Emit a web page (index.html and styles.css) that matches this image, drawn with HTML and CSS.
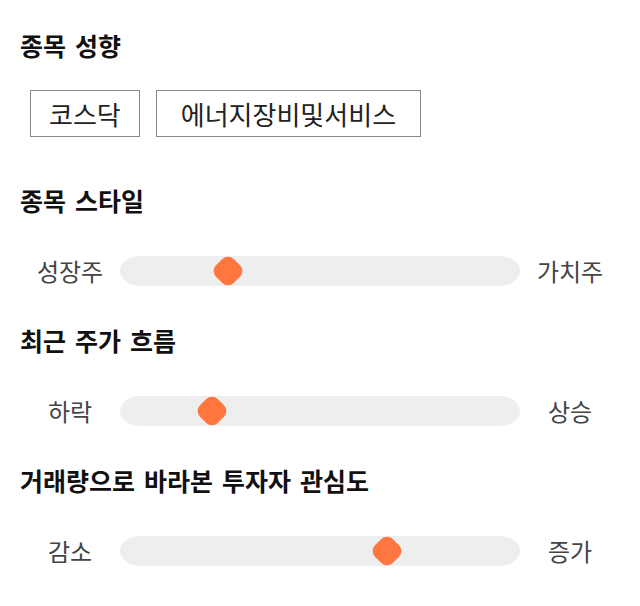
FILE: index.html
```html
<!DOCTYPE html>
<html lang="ko">

<head>
 <meta charset="UTF-8">
 <meta name="viewport" content="width=device-width, initial-scale=1.0">
 <title>종목 분석</title>
 <link rel="stylesheet" href="styles.css">
</head>

<body>

 <section class="block block-chips">
  <h2 class="block-title">종목 성향</h2>
  <div class="chips">
   <span class="chip">코스닥</span>
   <span class="chip chip-wide">에너지장비및서비스</span>
  </div>
 </section>

 <section class="block">
  <h2 class="block-title">종목 스타일</h2>
  <div class="scale">
   <span class="scale-label">성장주</span>
   <div class="track"><span class="thumb" style="left: 27%"></span></div>
   <span class="scale-label">가치주</span>
  </div>
 </section>

 <section class="block">
  <h2 class="block-title">최근 주가 흐름</h2>
  <div class="scale">
   <span class="scale-label">하락</span>
   <div class="track"><span class="thumb" style="left: 23%"></span></div>
   <span class="scale-label">상승</span>
  </div>
 </section>

 <section class="block">
  <h2 class="block-title">거래량으로 바라본 투자자 관심도</h2>
  <div class="scale">
   <span class="scale-label">감소</span>
   <div class="track"><span class="thumb" style="left: 66.8%"></span></div>
   <span class="scale-label">증가</span>
  </div>
 </section>

</body>

</html>
```

FILE: styles.css
```css
:root {
 --main-font: "Noto Sans CJK KR", "Noto Sans", sans-serif;
 --title-color: #111;
 --text-color: #444;
 --track-color: #eeeeee;
 --thumb-color: #ff763f;
}

html {
 box-sizing: border-box;
 font-family: var(--main-font);
}

*,
*::before,
*::after {
 box-sizing: inherit;
}

body {
 margin: 0;
 padding: 30px 20px 0;
 background: #fff;
}

/* - - - Bloques - - - */
.block {
 margin-bottom: 39px;
}

.block-chips {
 margin-bottom: 48px;
}

.block-title {
 margin: 0;
 font-size: 25px;
 line-height: 30px;
 font-weight: 700;
 word-spacing: 2px;
 color: var(--title-color);
}

/* - - - Chips - - - */
.chips {
 display: flex;
 gap: 16px;
 margin: 30px 0 0 10px;
}

.chip {
 height: 47px;
 padding: 0 18px;
 border: 1px solid #888;
 font-size: 26px;
 line-height: 45px;
 color: #222;
}

.chip-wide {
 padding: 0 24px;
}

/* - - - Escalas - - - */
.scale {
 display: grid;
 grid-template-columns: 100px 1fr 100px;
 align-items: center;
 margin-top: 41px;
}

.scale-label {
 font-size: 24px;
 line-height: 30px;
 text-align: center;
 color: var(--text-color);
}

.track {
 position: relative;
 height: 30px;
 border-radius: 20px / 15px;
 background: var(--track-color);
}

.thumb {
 position: absolute;
 top: 50%;
 width: 25px;
 height: 25px;
 border-radius: 8px;
 background: var(--thumb-color);
 transform: translate(-50%, -50%) rotate(45deg);
}
```
